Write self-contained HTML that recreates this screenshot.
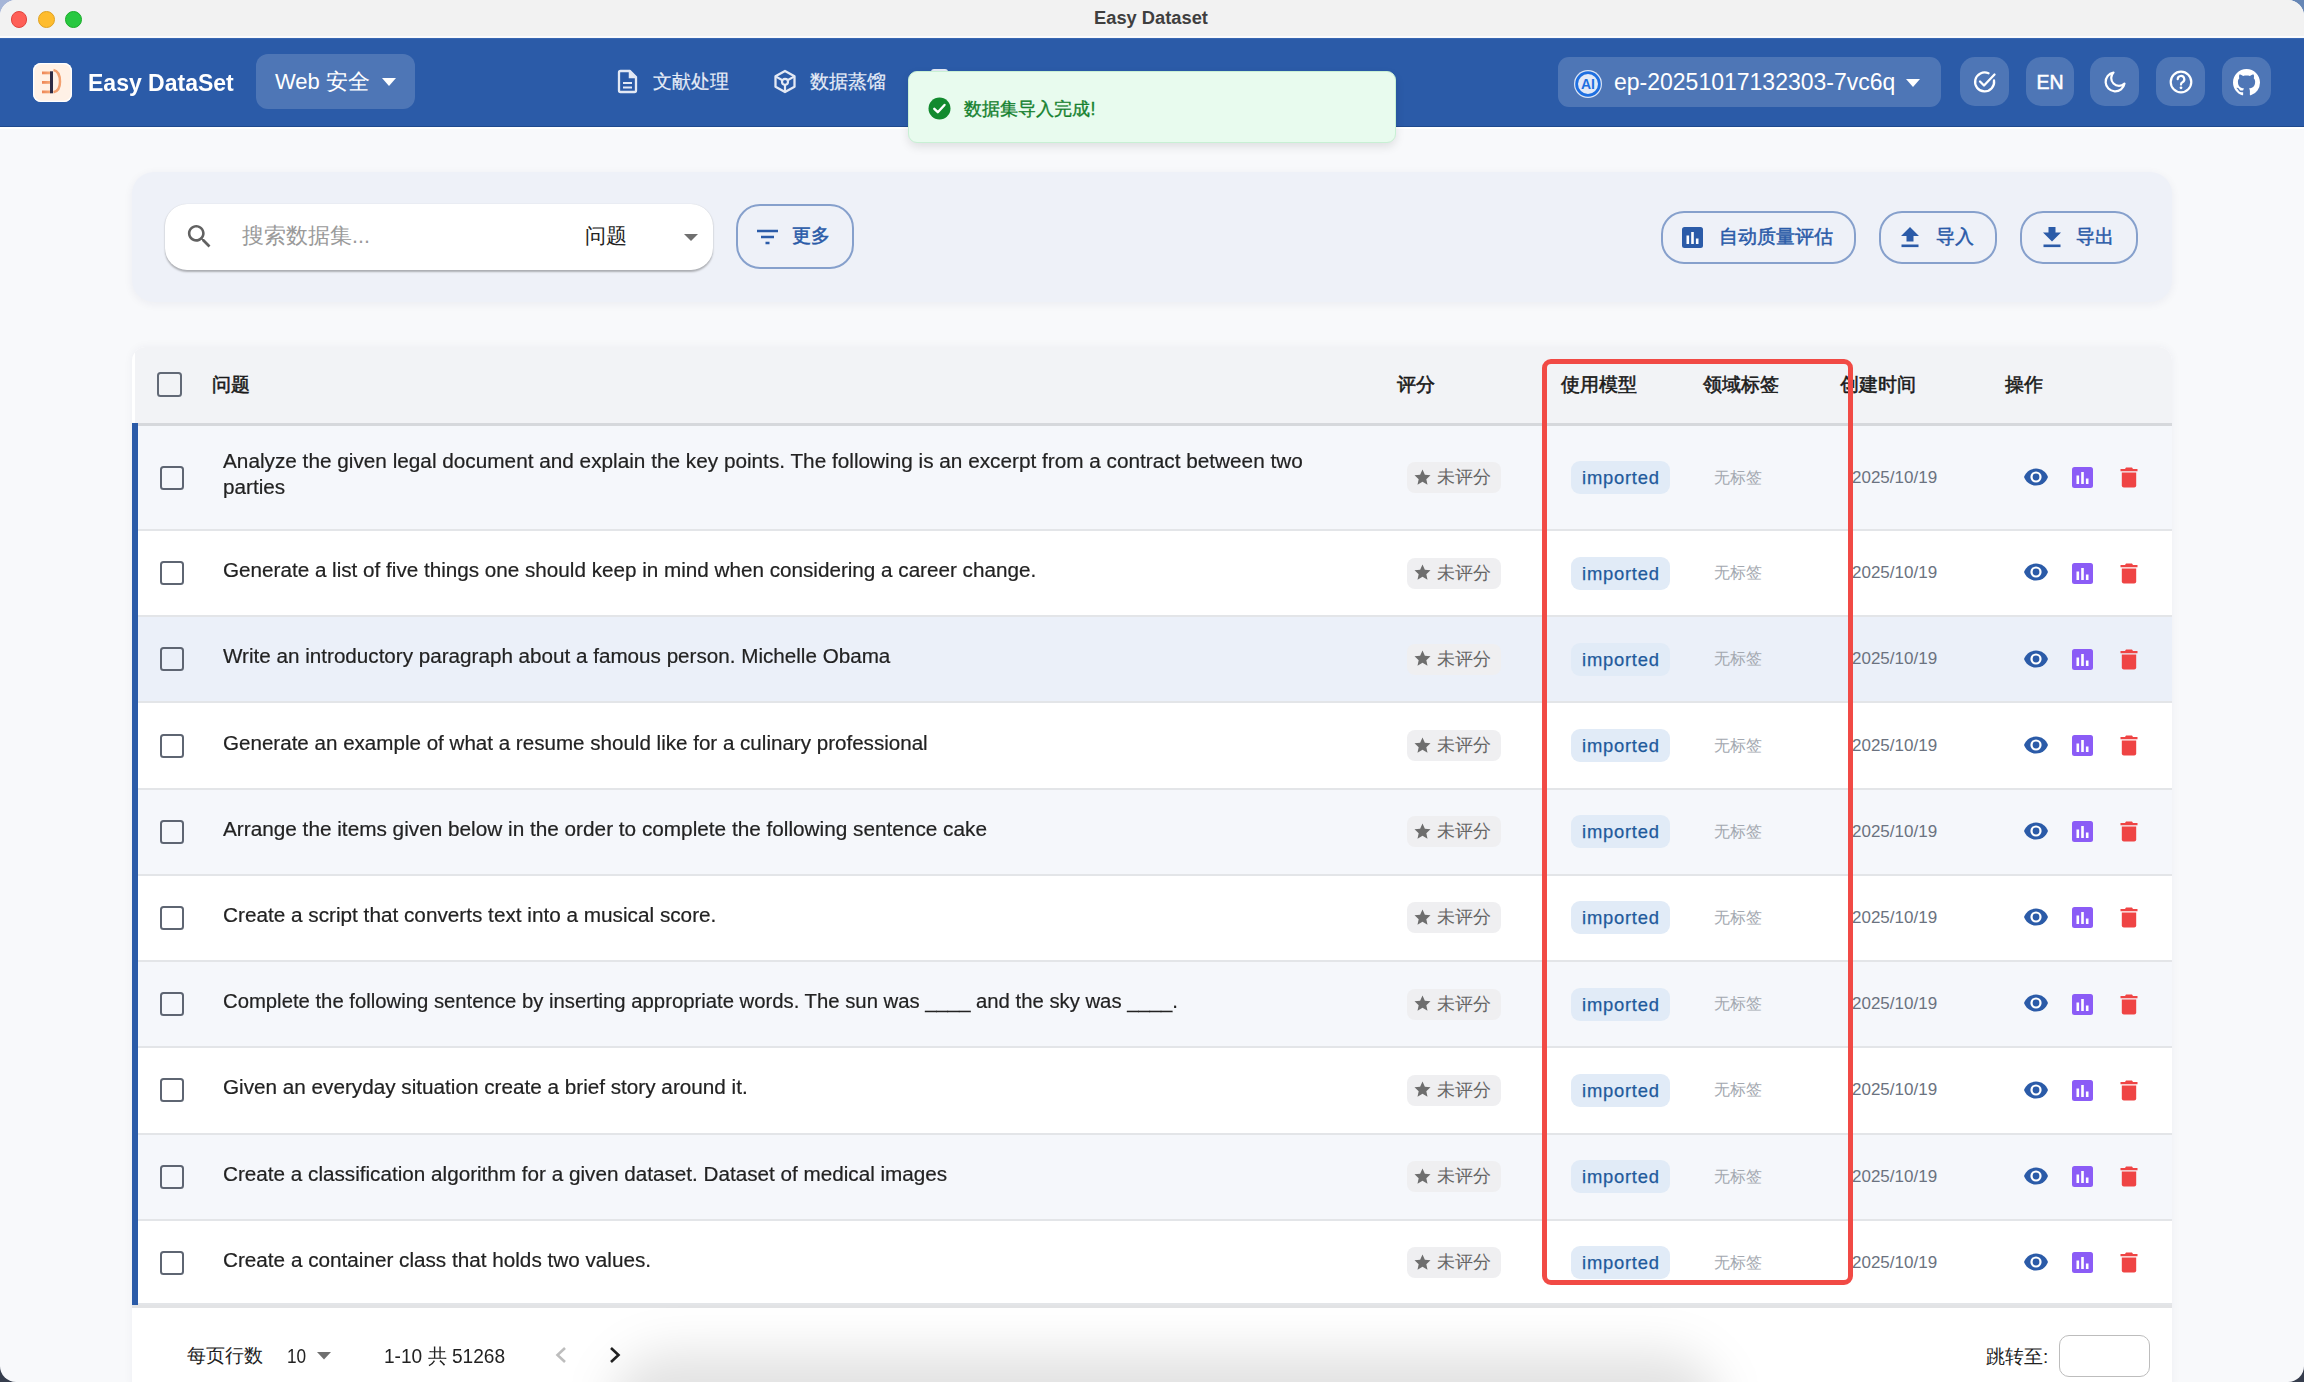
<!DOCTYPE html>
<html><head><meta charset="utf-8">
<style>
*{box-sizing:border-box;margin:0;padding:0}
html,body{width:2304px;height:1382px;overflow:hidden;background:linear-gradient(to bottom,rgba(0,0,0,0) 0,rgba(0,0,0,0) 700px,#363D4D 700px),linear-gradient(to right,#A5B5D7,#6686B5);font-family:"Liberation Sans",sans-serif}
.abs{position:absolute}
#win{position:absolute;left:0;top:0;width:2304px;height:1382px;background:#F8F9FB;overflow:hidden;border-radius:16px}
#titlebar{position:absolute;left:0;top:0;width:2304px;height:37px;background:#F2F2F2;border-bottom:1px solid #FCFCFD}
.tl{position:absolute;top:10.8px;width:16.8px;height:16.8px;border-radius:50%}
#header{position:absolute;left:0;top:38px;width:2304px;height:89px;background:#2B5BA8;border-bottom:1.5px solid #1F4A8E}
.hbtn{position:absolute;background:rgba(255,255,255,0.17)}
.wt{color:#fff;white-space:nowrap}
.nav{color:#E6ECF7;font-size:19px;white-space:nowrap;-webkit-text-stroke:0.2px #E6ECF7}
#toolbar{position:absolute;left:132px;top:172px;width:2040px;height:130px;background:#EEF1F8;border-radius:22px;box-shadow:0 2px 10px rgba(30,40,80,0.06)}
#search{position:absolute;left:165px;top:204px;width:548px;height:66px;background:#fff;border-radius:22px;box-shadow:0 1.5px 2px rgba(0,0,0,0.28),0 0 1px rgba(0,0,0,0.08)}
.obtn{position:absolute;border:2px solid #86A0CC;border-radius:23px;color:#2B5BA8;font-size:20px;white-space:nowrap}
#table{position:absolute;left:132px;top:347px;width:2040px;height:1040px;background:#fff;border-radius:14px 14px 0 0;box-shadow:0 0 10px rgba(30,40,80,0.05);overflow:hidden}
#thead{position:absolute;left:3px;top:0;width:2037px;height:79px;background:#F2F3F6;border-bottom:3px solid #D6D8DC}
.row{position:absolute;left:138px;width:2034px;border-bottom:2px solid #E3E5E8}
.cb{position:absolute;width:24px;height:24px;border:2.8px solid #5E6572;border-radius:3.5px}
.q{position:absolute;left:223px;transform-origin:0 0;font-size:20px;color:#222;-webkit-text-stroke:0.2px #222;white-space:nowrap;line-height:26px}
.nt,.dt{line-height:26px}
.th{line-height:26px}
.chip{position:absolute;left:1407px;width:94px;height:31px;background:#EFEFF1;border-radius:8px;color:#666;font-size:18px}
.imp{position:absolute;left:1571px;width:99px;height:33px;background:#E1EBF7;border-radius:9px;color:#1F5A9C;font-size:18.4px;-webkit-text-stroke:0.25px #1F5A9C;letter-spacing:0.75px;text-indent:0.75px}
.nt{position:absolute;left:1714px;color:#A3A8B0;font-size:16px;white-space:nowrap}
.dt{position:absolute;left:1852px;color:#6B7280;font-size:17px;white-space:nowrap}
.th{position:absolute;top:372px;font-size:19px;color:#1A1A1A;-webkit-text-stroke:0.55px #1A1A1A;white-space:nowrap}
.star{position:absolute;left:6.5px;top:6.5px}
.ct{position:absolute;left:30px;top:0;line-height:31px;white-space:nowrap}
.imp{text-align:center;line-height:34px}
.ic{position:absolute}
</style></head>
<body>
<div id="win">
  <div id="titlebar">
    <div class="tl" style="left:10.6px;background:#FE5F57;border:0.5px solid #E0443E"></div>
    <div class="tl" style="left:38.2px;background:#FEBC2E;border:0.5px solid #DEA123"></div>
    <div class="tl" style="left:65.4px;background:#28C840;border:0.5px solid #1AAB29"></div>
    <div class="abs" style="left:0;width:2304px;top:7px;text-align:center;font-size:18.3px;font-weight:bold;color:#3F3F3F;padding-right:2px">Easy Dataset</div>
  </div>
  <div id="header">
    <!-- logo -->
    <div class="abs" style="left:33px;top:25px;width:38.5px;height:38.5px;background:#FFF1E6;border-radius:8px;box-shadow:inset 0 0 0 1.3px #FFFFFF">
      <svg width="38" height="38" viewBox="0 0 38 38" style="position:absolute;left:0;top:0">
        <defs><linearGradient id="og" x1="0" x2="1"><stop offset="0" stop-color="#EE8454"/><stop offset="1" stop-color="#F5AA78"/></linearGradient></defs>
        <rect x="9" y="8.5" width="8.5" height="2.8" fill="url(#og)"/>
        <rect x="9" y="18" width="8.5" height="2.8" fill="url(#og)"/>
        <rect x="9" y="27.5" width="8.5" height="2.8" fill="url(#og)"/>
        <rect x="17" y="8.3" width="3" height="22" fill="#2E2B45"/>
        <path d="M20.5 7 C25.5 8 27 13.5 27 18.8 C27 24 25 28.5 20.5 29.3" stroke="#F2A070" stroke-width="2.5" fill="none"/>
      </svg>
    </div>
    <div class="abs wt" style="left:88px;top:25px;font-size:24.5px;font-weight:bold;line-height:40px;transform:scaleX(0.939);transform-origin:0 0">Easy DataSet</div>
    <!-- project selector -->
    <div class="hbtn" style="left:256px;top:16px;width:159px;height:55px;border-radius:12px"></div>
    <div class="abs wt" style="left:275px;top:24px;font-size:22px;line-height:40px">Web 安全</div>
    <svg class="abs" style="left:382px;top:40px" width="14" height="8" viewBox="0 0 14 8"><path d="M0 0 L14 0 L7 8 Z" fill="#fff"/></svg>
    <!-- nav -->
    <svg class="abs" style="left:617px;top:31px" width="22" height="25" viewBox="0 0 22 25">
      <path d="M3.5 2 H13 L19 8 V21.5 a1.5 1.5 0 0 1 -1.5 1.5 H3.5 a1.5 1.5 0 0 1 -1.5 -1.5 V3.5 a1.5 1.5 0 0 1 1.5 -1.5 Z" fill="none" stroke="#E3E9F5" stroke-width="2.3" stroke-linejoin="round"/>
      <path d="M12.5 2.5 V8.5 H18.5" fill="#E3E9F5" stroke="#E3E9F5" stroke-width="1.5"/>
      <path d="M6 14 H15 M6 18.5 H15" stroke="#E3E9F5" stroke-width="2.2"/>
    </svg>
    <div class="abs nav" style="left:653px;top:24px;line-height:40px">文献处理</div>
    <svg class="abs" style="left:773px;top:31px" width="24" height="25" viewBox="0 0 24 25">
      <path d="M12 2 L21.5 7.3 V17.7 L12 23 L2.5 17.7 V7.3 Z" fill="none" stroke="#E3E9F5" stroke-width="2.3" stroke-linejoin="round"/>
      <circle cx="12" cy="12.8" r="3" fill="none" stroke="#E3E9F5" stroke-width="2.2"/>
      <path d="M3 7.6 L9.4 11.3 M21 7.6 L14.6 11.3 M12 15.8 V22.5" stroke="#E3E9F5" stroke-width="2.2"/>
    </svg>
    <div class="abs nav" style="left:810px;top:24px;line-height:40px">数据蒸馏</div>
    <div class="abs" style="left:931px;top:31px;width:17px;height:6px;background:#E3E9F5;border-radius:3px 3px 0 0"></div>
    <!-- model selector -->
    <div class="hbtn" style="left:1558px;top:19px;width:383px;height:50px;border-radius:11px"></div>
    <svg class="abs" style="left:1573px;top:31px" width="30" height="30" viewBox="0 0 30 30">
      <circle cx="15" cy="15" r="14" fill="#DCE5F5"/>
      <circle cx="15" cy="15" r="11.4" fill="#E2E9F7" stroke="#1E6FE0" stroke-width="2.8"/>
      <text x="15" y="20.2" text-anchor="middle" font-family="Liberation Sans" font-weight="bold" font-size="14" fill="#1E6FE0">AI</text>
    </svg>
    <div class="abs wt" style="left:1614px;top:23.5px;font-size:23px;line-height:40px">ep-20251017132303-7vc6q</div>
    <svg class="abs" style="left:1906px;top:41px" width="14" height="8" viewBox="0 0 14 8"><path d="M0 0 L14 0 L7 8 Z" fill="#fff"/></svg>
    <!-- icon buttons -->
    <div class="hbtn" style="left:1960px;top:19px;width:49px;height:49px;border-radius:15px"></div>
    <svg class="abs" style="left:1972px;top:31px" width="26" height="26" viewBox="0 0 26 26">
      <path d="M22 11.5 A9.5 9.5 0 1 1 16.5 4.3" fill="none" stroke="#fff" stroke-width="2.3" stroke-linecap="round"/>
      <path d="M8 12.5 L12 16.5 L22.5 5.5" fill="none" stroke="#fff" stroke-width="2.3" stroke-linecap="round" stroke-linejoin="round"/>
    </svg>
    <div class="hbtn" style="left:2026px;top:19px;width:48px;height:49px;border-radius:15px"></div>
    <div class="abs wt" style="left:2026px;width:48px;text-align:center;top:24px;font-size:19.5px;line-height:40px;-webkit-text-stroke:0.5px #fff">EN</div>
    <div class="hbtn" style="left:2090px;top:19px;width:49px;height:49px;border-radius:15px"></div>
    <svg class="abs" style="left:2102px;top:31px" width="26" height="26" viewBox="0 0 26 26">
      <path d="M11.5 3.5 A9.5 9.5 0 1 0 22.5 14.5 A7.5 7.5 0 0 1 11.5 3.5 Z" fill="none" stroke="#fff" stroke-width="2.2" stroke-linejoin="round"/>
    </svg>
    <div class="hbtn" style="left:2156px;top:19px;width:49px;height:49px;border-radius:15px"></div>
    <svg class="abs" style="left:2168px;top:31px" width="26" height="26" viewBox="0 0 26 26">
      <circle cx="13" cy="13" r="10.3" fill="none" stroke="#fff" stroke-width="2.2"/>
      <path d="M9.7 10.2 A3.3 3.3 0 1 1 14.5 13.2 C13.3 13.8 13 14.4 13 15.6" fill="none" stroke="#fff" stroke-width="2.2" stroke-linecap="round"/>
      <circle cx="13" cy="18.8" r="1.4" fill="#fff"/>
    </svg>
    <div class="hbtn" style="left:2222px;top:19px;width:49px;height:49px;border-radius:15px"></div>
    <svg class="abs" style="left:2233px;top:31px" width="27" height="27" viewBox="0 0 16 16">
      <path fill="#fff" d="M8 0C3.58 0 0 3.58 0 8c0 3.54 2.29 6.53 5.47 7.59.4.07.55-.17.55-.38 0-.19-.01-.82-.01-1.49-2.01.37-2.53-.49-2.69-.94-.09-.23-.48-.94-.82-1.13-.28-.15-.68-.52-.01-.53.63-.01 1.08.58 1.23.82.72 1.21 1.87.87 2.33.66.07-.52.28-.87.51-1.07-1.78-.2-3.64-.89-3.64-3.95 0-.87.31-1.59.82-2.15-.08-.2-.36-1.02.08-2.12 0 0 .67-.21 2.2.82.64-.18 1.32-.27 2-.27.68 0 1.36.09 2 .27 1.53-1.04 2.2-.82 2.2-.82.44 1.1.16 1.92.08 2.12.51.56.82 1.27.82 2.15 0 3.07-1.87 3.75-3.65 3.95.29.25.54.73.54 1.48 0 1.07-.01 1.93-.01 2.2 0 .21.15.46.55.38A8.013 8.013 0 0016 8c0-4.42-3.58-8-8-8z"/>
    </svg>
  </div>
  <!-- toast -->
  <div class="abs" style="z-index:10;left:908px;top:71px;width:488px;height:72px;background:#E8FBEE;border:1.5px solid #C8F0D4;border-radius:9px;box-shadow:0 4px 10px rgba(0,0,0,0.10)">
    <svg class="abs" style="left:19px;top:25px" width="23" height="23" viewBox="0 0 23 23">
      <circle cx="11.5" cy="11.5" r="11" fill="#128A2E"/>
      <path d="M6.3 11.8 L9.8 15.2 L16.5 8" fill="none" stroke="#fff" stroke-width="2.4" stroke-linecap="round" stroke-linejoin="round"/>
    </svg>
    <div class="abs" style="left:55px;top:17px;font-size:17.8px;line-height:40px;color:#15812F;-webkit-text-stroke:0.35px #15812F;white-space:nowrap">数据集导入完成<span style="margin-left:0.5px">!</span></div>
  </div>
  <div class="abs" style="left:0;top:127px;width:2304px;height:1.5px;background:#FFFFFF"></div>
  <div class="abs" style="left:0;top:38px;width:2304px;height:1px;background:#3867B2"></div>
  <div id="toolbar"></div>
  <div id="search"></div>
  <svg class="abs" style="left:184px;top:220.5px" width="31" height="31" viewBox="0 0 24 24">
    <path fill="#616161" d="M15.5 14h-.79l-.28-.27C15.41 12.59 16 11.11 16 9.5 16 5.91 13.09 3 9.5 3S3 5.91 3 9.5 5.91 16 9.5 16c1.61 0 3.09-.59 4.23-1.57l.27.28v.79l5 4.99L20.49 19l-4.99-5zm-6 0C7.01 14 5 11.99 5 9.5S7.01 5 9.5 5 14 7.01 14 9.5 11.99 14 9.5 14z"/>
  </svg>
  <div class="abs" style="left:242px;top:216px;font-size:21.5px;line-height:40px;color:#9A9A9A;white-space:nowrap">搜索数据集...</div>
  <div class="abs" style="left:585px;top:216px;font-size:21px;line-height:40px;color:#222;white-space:nowrap">问题</div>
  <svg class="abs" style="left:684px;top:234px" width="14" height="7" viewBox="0 0 14 7"><path d="M0 0 L14 0 L7 7 Z" fill="#6F6F6F"/></svg>
  <!-- more button -->
  <div class="obtn" style="left:736px;top:204px;width:118px;height:65px;border-radius:24px"></div>
  <svg class="abs" style="left:756px;top:229px" width="23" height="16" viewBox="0 0 23 16">
    <path d="M1 2 H22 M5 8 H18 M9.5 14 H13.5" stroke="#2B5BA8" stroke-width="2.4"/>
  </svg>
  <div class="abs" style="left:792px;top:216px;font-size:18.7px;line-height:40px;color:#2B5BA8;-webkit-text-stroke:0.5px #2B5BA8;white-space:nowrap">更多</div>
  <!-- right buttons -->
  <div class="obtn" style="left:1661px;top:211px;width:195px;height:53px"></div>
  <svg class="abs" style="left:1682px;top:227px" width="21" height="21" viewBox="0 0 21 21">
    <rect x="0" y="0" width="21" height="21" rx="2.5" fill="#2B5BA8"/>
    <rect x="4.5" y="8.5" width="2.6" height="8.5" fill="#fff"/><rect x="9.2" y="5" width="2.6" height="12" fill="#fff"/><rect x="13.9" y="11.5" width="2.6" height="5.5" fill="#fff"/>
  </svg>
  <div class="abs" style="left:1719px;top:217px;font-size:18.7px;line-height:40px;color:#2B5BA8;-webkit-text-stroke:0.5px #2B5BA8;white-space:nowrap">自动质量评估</div>
  <div class="obtn" style="left:1879px;top:211px;width:118px;height:53px"></div>
  <svg class="abs" style="left:1900px;top:226px" width="20" height="22" viewBox="0 0 20 22">
    <path d="M10 1 L19 10 H13.5 V15.5 H6.5 V10 H1 Z" fill="#2B5BA8"/><rect x="1.5" y="18.5" width="17" height="2.6" fill="#2B5BA8"/>
  </svg>
  <div class="abs" style="left:1936px;top:217px;font-size:18.7px;line-height:40px;color:#2B5BA8;-webkit-text-stroke:0.5px #2B5BA8;white-space:nowrap">导入</div>
  <div class="obtn" style="left:2020px;top:211px;width:118px;height:53px"></div>
  <svg class="abs" style="left:2042px;top:226px" width="20" height="22" viewBox="0 0 20 22">
    <path d="M10 15.5 L19 6.5 H13.5 V1 H6.5 V6.5 H1 Z" fill="#2B5BA8"/><rect x="1.5" y="18.5" width="17" height="2.6" fill="#2B5BA8"/>
  </svg>
  <div class="abs" style="left:2076px;top:217px;font-size:18.7px;line-height:40px;color:#2B5BA8;-webkit-text-stroke:0.5px #2B5BA8;white-space:nowrap">导出</div>
  <div id="table">
    <div id="thead"></div>
  </div>
  <svg width="0" height="0" style="position:absolute">
    <defs>
      <g id="eye"><path d="M13 1.5C7.3 1.5 2.9 5 1 10c1.9 5 6.3 8.5 12 8.5s10.1-3.5 12-8.5C23.1 5 18.7 1.5 13 1.5z" fill="#2B5BA8"/><circle cx="13" cy="10" r="5.6" fill="#fff"/><circle cx="13" cy="10" r="3.4" fill="#2B5BA8"/></g>
      <g id="bar"><rect x="0" y="0" width="21" height="21" rx="2.5" fill="#8B5CF6"/><rect x="4.5" y="8.5" width="2.6" height="8.5" fill="#fff"/><rect x="9.2" y="5" width="2.6" height="12" fill="#fff"/><rect x="13.9" y="11.5" width="2.6" height="5.5" fill="#fff"/></g>
      <g id="trash"><path d="M6 0.5 H12 L13 2 H17.5 V4.3 H0.5 V2 H5 Z" fill="#EF4444"/><path d="M1.8 5.5 H16.2 V18.5 a2 2 0 0 1 -2 2 H3.8 a2 2 0 0 1 -2 -2 Z" fill="#EF4444"/></g>
    </defs>
  </svg>
  <div class="th" style="left:212px">问题</div>
  <div class="cb" style="left:157px;top:372px;width:25px;height:25px;border-color:#626976"></div>
  <div class="th" style="left:1397px">评分</div>
  <div class="th" style="left:1561px">使用模型</div>
  <div class="th" style="left:1703px">领域标签</div>
  <div class="th" style="left:1840px">创建时间</div>
  <div class="th" style="left:2005px">操作</div>
<div class="row" style="top:426.00px;height:105.00px;background:#F5F7FB"></div>
<div class="cb" style="left:160px;top:465.50px"></div>
<div class="q" style="top:448px;transform:scaleX(1.038)">Analyze the given legal document and explain the key points. The following is an excerpt from a contract between two<br><span style="display:inline-block;transform:scaleX(0.9971);transform-origin:0 0">parties</span></div>
<div class="chip" style="top:462.00px"><svg class="star" width="17" height="16" viewBox="0 0 24 23"><path d="M12 0.8l3.4 7.4 8.1.9-6 5.5 1.7 8L12 18.5 4.8 22.6l1.7-8-6-5.5 8.1-.9z" fill="#6E6E6E"/></svg><span class="ct">未评分</span></div>
<div class="imp" style="top:461.00px">imported</div>
<div class="nt" style="top:464.50px">无标签</div>
<div class="dt" style="top:464.50px">2025/10/19</div>
<svg class="ic" style="left:2023px;top:466.70px" width="26" height="20" viewBox="0 0 26 20"><use href="#eye"/></svg>
<svg class="ic" style="left:2072px;top:467.00px" width="21" height="21" viewBox="0 0 21 21"><use href="#bar"/></svg>
<svg class="ic" style="left:2120px;top:467.00px" width="18" height="21" viewBox="0 0 18 21"><use href="#trash"/></svg>
<div class="row" style="top:531.00px;height:86.22px;background:#FFFFFF"></div>
<div class="cb" style="left:160px;top:561.11px"></div>
<div class="q" style="top:557.11px;transform:scaleX(1.033)">Generate a list of five things one should keep in mind when considering a career change.</div>
<div class="chip" style="top:557.61px"><svg class="star" width="17" height="16" viewBox="0 0 24 23"><path d="M12 0.8l3.4 7.4 8.1.9-6 5.5 1.7 8L12 18.5 4.8 22.6l1.7-8-6-5.5 8.1-.9z" fill="#6E6E6E"/></svg><span class="ct">未评分</span></div>
<div class="imp" style="top:556.61px">imported</div>
<div class="nt" style="top:560.11px">无标签</div>
<div class="dt" style="top:560.11px">2025/10/19</div>
<svg class="ic" style="left:2023px;top:562.31px" width="26" height="20" viewBox="0 0 26 20"><use href="#eye"/></svg>
<svg class="ic" style="left:2072px;top:562.61px" width="21" height="21" viewBox="0 0 21 21"><use href="#bar"/></svg>
<svg class="ic" style="left:2120px;top:562.61px" width="18" height="21" viewBox="0 0 18 21"><use href="#trash"/></svg>
<div class="row" style="top:617.22px;height:86.22px;background:#EBF0F9"></div>
<div class="cb" style="left:160px;top:647.33px"></div>
<div class="q" style="top:643.33px;transform:scaleX(1.032)">Write an introductory paragraph about a famous person. Michelle Obama</div>
<div class="chip" style="top:643.83px"><svg class="star" width="17" height="16" viewBox="0 0 24 23"><path d="M12 0.8l3.4 7.4 8.1.9-6 5.5 1.7 8L12 18.5 4.8 22.6l1.7-8-6-5.5 8.1-.9z" fill="#6E6E6E"/></svg><span class="ct">未评分</span></div>
<div class="imp" style="top:642.83px">imported</div>
<div class="nt" style="top:646.33px">无标签</div>
<div class="dt" style="top:646.33px">2025/10/19</div>
<svg class="ic" style="left:2023px;top:648.53px" width="26" height="20" viewBox="0 0 26 20"><use href="#eye"/></svg>
<svg class="ic" style="left:2072px;top:648.83px" width="21" height="21" viewBox="0 0 21 21"><use href="#bar"/></svg>
<svg class="ic" style="left:2120px;top:648.83px" width="18" height="21" viewBox="0 0 18 21"><use href="#trash"/></svg>
<div class="row" style="top:703.44px;height:86.22px;background:#FFFFFF"></div>
<div class="cb" style="left:160px;top:733.55px"></div>
<div class="q" style="top:729.55px;transform:scaleX(1.029)">Generate an example of what a resume should like for a culinary professional</div>
<div class="chip" style="top:730.05px"><svg class="star" width="17" height="16" viewBox="0 0 24 23"><path d="M12 0.8l3.4 7.4 8.1.9-6 5.5 1.7 8L12 18.5 4.8 22.6l1.7-8-6-5.5 8.1-.9z" fill="#6E6E6E"/></svg><span class="ct">未评分</span></div>
<div class="imp" style="top:729.05px">imported</div>
<div class="nt" style="top:732.55px">无标签</div>
<div class="dt" style="top:732.55px">2025/10/19</div>
<svg class="ic" style="left:2023px;top:734.75px" width="26" height="20" viewBox="0 0 26 20"><use href="#eye"/></svg>
<svg class="ic" style="left:2072px;top:735.05px" width="21" height="21" viewBox="0 0 21 21"><use href="#bar"/></svg>
<svg class="ic" style="left:2120px;top:735.05px" width="18" height="21" viewBox="0 0 18 21"><use href="#trash"/></svg>
<div class="row" style="top:789.66px;height:86.22px;background:#F5F7FB"></div>
<div class="cb" style="left:160px;top:819.77px"></div>
<div class="q" style="top:815.77px;transform:scaleX(1.038)">Arrange the items given below in the order to complete the following sentence cake</div>
<div class="chip" style="top:816.27px"><svg class="star" width="17" height="16" viewBox="0 0 24 23"><path d="M12 0.8l3.4 7.4 8.1.9-6 5.5 1.7 8L12 18.5 4.8 22.6l1.7-8-6-5.5 8.1-.9z" fill="#6E6E6E"/></svg><span class="ct">未评分</span></div>
<div class="imp" style="top:815.27px">imported</div>
<div class="nt" style="top:818.77px">无标签</div>
<div class="dt" style="top:818.77px">2025/10/19</div>
<svg class="ic" style="left:2023px;top:820.97px" width="26" height="20" viewBox="0 0 26 20"><use href="#eye"/></svg>
<svg class="ic" style="left:2072px;top:821.27px" width="21" height="21" viewBox="0 0 21 21"><use href="#bar"/></svg>
<svg class="ic" style="left:2120px;top:821.27px" width="18" height="21" viewBox="0 0 18 21"><use href="#trash"/></svg>
<div class="row" style="top:875.88px;height:86.22px;background:#FFFFFF"></div>
<div class="cb" style="left:160px;top:905.99px"></div>
<div class="q" style="top:901.99px;transform:scaleX(1.037)">Create a script that converts text into a musical score.</div>
<div class="chip" style="top:902.49px"><svg class="star" width="17" height="16" viewBox="0 0 24 23"><path d="M12 0.8l3.4 7.4 8.1.9-6 5.5 1.7 8L12 18.5 4.8 22.6l1.7-8-6-5.5 8.1-.9z" fill="#6E6E6E"/></svg><span class="ct">未评分</span></div>
<div class="imp" style="top:901.49px">imported</div>
<div class="nt" style="top:904.99px">无标签</div>
<div class="dt" style="top:904.99px">2025/10/19</div>
<svg class="ic" style="left:2023px;top:907.19px" width="26" height="20" viewBox="0 0 26 20"><use href="#eye"/></svg>
<svg class="ic" style="left:2072px;top:907.49px" width="21" height="21" viewBox="0 0 21 21"><use href="#bar"/></svg>
<svg class="ic" style="left:2120px;top:907.49px" width="18" height="21" viewBox="0 0 18 21"><use href="#trash"/></svg>
<div class="row" style="top:962.10px;height:86.22px;background:#F5F7FB"></div>
<div class="cb" style="left:160px;top:992.21px"></div>
<div class="q" style="top:988.21px;transform:scaleX(1.0145)">Complete the following sentence by inserting appropriate words. The sun was ____ and the sky was ____.</div>
<div class="chip" style="top:988.71px"><svg class="star" width="17" height="16" viewBox="0 0 24 23"><path d="M12 0.8l3.4 7.4 8.1.9-6 5.5 1.7 8L12 18.5 4.8 22.6l1.7-8-6-5.5 8.1-.9z" fill="#6E6E6E"/></svg><span class="ct">未评分</span></div>
<div class="imp" style="top:987.71px">imported</div>
<div class="nt" style="top:991.21px">无标签</div>
<div class="dt" style="top:991.21px">2025/10/19</div>
<svg class="ic" style="left:2023px;top:993.41px" width="26" height="20" viewBox="0 0 26 20"><use href="#eye"/></svg>
<svg class="ic" style="left:2072px;top:993.71px" width="21" height="21" viewBox="0 0 21 21"><use href="#bar"/></svg>
<svg class="ic" style="left:2120px;top:993.71px" width="18" height="21" viewBox="0 0 18 21"><use href="#trash"/></svg>
<div class="row" style="top:1048.32px;height:86.22px;background:#FFFFFF"></div>
<div class="cb" style="left:160px;top:1078.43px"></div>
<div class="q" style="top:1074.43px;transform:scaleX(1.035)">Given an everyday situation create a brief story around it.</div>
<div class="chip" style="top:1074.93px"><svg class="star" width="17" height="16" viewBox="0 0 24 23"><path d="M12 0.8l3.4 7.4 8.1.9-6 5.5 1.7 8L12 18.5 4.8 22.6l1.7-8-6-5.5 8.1-.9z" fill="#6E6E6E"/></svg><span class="ct">未评分</span></div>
<div class="imp" style="top:1073.93px">imported</div>
<div class="nt" style="top:1077.43px">无标签</div>
<div class="dt" style="top:1077.43px">2025/10/19</div>
<svg class="ic" style="left:2023px;top:1079.63px" width="26" height="20" viewBox="0 0 26 20"><use href="#eye"/></svg>
<svg class="ic" style="left:2072px;top:1079.93px" width="21" height="21" viewBox="0 0 21 21"><use href="#bar"/></svg>
<svg class="ic" style="left:2120px;top:1079.93px" width="18" height="21" viewBox="0 0 18 21"><use href="#trash"/></svg>
<div class="row" style="top:1134.54px;height:86.22px;background:#F5F7FB"></div>
<div class="cb" style="left:160px;top:1164.65px"></div>
<div class="q" style="top:1160.65px;transform:scaleX(1.034)">Create a classification algorithm for a given dataset. Dataset of medical images</div>
<div class="chip" style="top:1161.15px"><svg class="star" width="17" height="16" viewBox="0 0 24 23"><path d="M12 0.8l3.4 7.4 8.1.9-6 5.5 1.7 8L12 18.5 4.8 22.6l1.7-8-6-5.5 8.1-.9z" fill="#6E6E6E"/></svg><span class="ct">未评分</span></div>
<div class="imp" style="top:1160.15px">imported</div>
<div class="nt" style="top:1163.65px">无标签</div>
<div class="dt" style="top:1163.65px">2025/10/19</div>
<svg class="ic" style="left:2023px;top:1165.85px" width="26" height="20" viewBox="0 0 26 20"><use href="#eye"/></svg>
<svg class="ic" style="left:2072px;top:1166.15px" width="21" height="21" viewBox="0 0 21 21"><use href="#bar"/></svg>
<svg class="ic" style="left:2120px;top:1166.15px" width="18" height="21" viewBox="0 0 18 21"><use href="#trash"/></svg>
<div class="row" style="top:1220.76px;height:84.22px;background:#FFFFFF"></div>
<div class="cb" style="left:160px;top:1250.87px"></div>
<div class="q" style="top:1246.87px;transform:scaleX(1.035)">Create a container class that holds two values.</div>
<div class="chip" style="top:1247.37px"><svg class="star" width="17" height="16" viewBox="0 0 24 23"><path d="M12 0.8l3.4 7.4 8.1.9-6 5.5 1.7 8L12 18.5 4.8 22.6l1.7-8-6-5.5 8.1-.9z" fill="#6E6E6E"/></svg><span class="ct">未评分</span></div>
<div class="imp" style="top:1246.37px">imported</div>
<div class="nt" style="top:1249.87px">无标签</div>
<div class="dt" style="top:1249.87px">2025/10/19</div>
<svg class="ic" style="left:2023px;top:1252.07px" width="26" height="20" viewBox="0 0 26 20"><use href="#eye"/></svg>
<svg class="ic" style="left:2072px;top:1252.37px" width="21" height="21" viewBox="0 0 21 21"><use href="#bar"/></svg>
<svg class="ic" style="left:2120px;top:1252.37px" width="18" height="21" viewBox="0 0 18 21"><use href="#trash"/></svg>

  <div class="abs" style="left:132px;top:423px;width:6px;height:883px;background:#2B5BA8"></div>
  <div class="abs" style="left:132px;top:1305px;width:2040px;height:3px;background:#E2E3E5"></div>
  <!-- footer -->
  <div class="abs" style="left:187px;top:1341px;font-size:19px;line-height:30px;color:#222;white-space:nowrap">每页行数</div>
  <div class="abs" style="left:287px;top:1340.5px;font-size:20px;line-height:30px;color:#222;white-space:nowrap;transform:scaleX(0.86);transform-origin:0 0">10</div>
  <svg class="abs" style="left:317px;top:1352px" width="14" height="8" viewBox="0 0 14 8"><path d="M0 0 L14 0 L7 7.5 Z" fill="#707070"/></svg>
  <div class="abs" style="left:384px;top:1341px;font-size:20px;line-height:30px;color:#222;white-space:nowrap;transform:scaleX(0.955);transform-origin:0 0">1-10 共 51268</div>
  <svg class="abs" style="left:553px;top:1346px" width="16" height="18" viewBox="0 0 16 18"><path d="M12 2 L4.5 9 L12 16" fill="none" stroke="#BDBDBD" stroke-width="2.6"/></svg>
  <svg class="abs" style="left:607px;top:1346px" width="16" height="18" viewBox="0 0 16 18"><path d="M4 2 L11.5 9 L4 16" fill="none" stroke="#222" stroke-width="2.6"/></svg>
  <div class="abs" style="left:1986px;top:1341.5px;font-size:19px;line-height:30px;color:#222;white-space:nowrap">跳转至:</div>
  <div class="abs" style="left:2059px;top:1335px;width:91px;height:42px;border:1.6px solid #BDBDBD;border-radius:10px;background:#fff"></div>
  <!-- bottom shadow -->
  <div class="abs" style="left:610px;top:1352px;width:1110px;height:120px;background:rgba(0,0,0,0.115);border-radius:80px;filter:blur(24px)"></div>
  <!-- red annotation box -->
  <div class="abs" style="left:1542px;top:359px;width:311px;height:926px;border:5px solid #F14A45;border-radius:9px"></div>
</div>
</body></html>
